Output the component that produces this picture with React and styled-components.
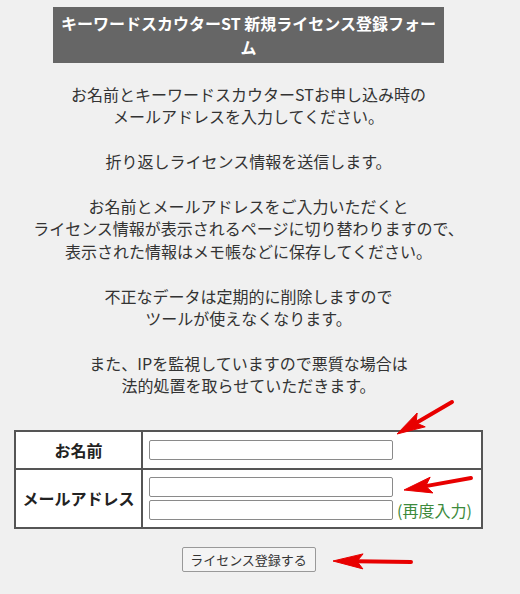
import React from "react";
import styled, { createGlobalStyle } from "styled-components";

const GlobalStyle = createGlobalStyle`
  html, body {
    margin: 0;
    padding: 0;
    background: #f0f0f0;
  }
  body {
    font-family: "Noto Sans CJK JP", "Noto Sans", sans-serif;
    color: #333;
  }
`;

const Page = styled.div`
  position: relative;
  width: 497px;
  min-height: 594px;
  padding-top: 7px;
  box-sizing: border-box;
  text-align: center;
`;

const Header = styled.h1`
  width: 391px;
  margin: 0 auto;
  padding: 4px 6px;
  box-sizing: border-box;
  background: #666;
  color: #fff;
  font-size: 16px;
  font-weight: bold;
  line-height: 24px;
`;

const Intro = styled.div`
  margin-top: 20px;
  display: flex;
  flex-direction: column;
  gap: 22.4px;
`;

const Para = styled.p`
  margin: 0;
  font-size: 16px;
  line-height: 22.4px;
  color: #333;
`;

const FormGrid = styled.div`
  width: 469px;
  margin: 33px auto 0;
  box-sizing: border-box;
  border: 2px solid #555;
  background: #555;
  display: grid;
  grid-template-columns: 125px 1fr;
  grid-template-rows: 36px 57px;
  gap: 2px;
`;

const LabelCell = styled.div`
  background: #fff;
  display: flex;
  align-items: center;
  justify-content: center;
  font-size: 16px;
  font-weight: bold;
  color: #222;
`;

const FieldCell = styled.div`
  background: #fff;
  display: flex;
  flex-direction: column;
  justify-content: center;
  gap: 3px;
  padding: 0 6px;
  text-align: left;
`;

const FieldRow = styled.div`
  display: flex;
  align-items: center;
  gap: 4px;
`;

const TextInput = styled.input`
  width: 244px;
  height: 20px;
  box-sizing: border-box;
  border: 1px solid #8a8a8a;
  border-radius: 2px;
  background: #fff;
  padding: 0 3px;
  margin: 0;
  font-size: 13px;
`;

const Hint = styled.span`
  font-size: 16px;
  color: #3c8a3c;
  line-height: 20px;
`;

const ButtonRow = styled.div`
  margin-top: 18px;
  display: flex;
  justify-content: center;
`;

const SubmitButton = styled.button`
  width: 134px;
  height: 25px;
  box-sizing: border-box;
  border: 1px solid #999;
  border-radius: 2px;
  background: #f4f4f4;
  color: #333;
  font-family: "Noto Sans CJK JP", sans-serif;
  font-size: 13px;
  padding: 0;
  line-height: 23px;
`;

const Overlay = styled.svg`
  position: absolute;
  left: 0;
  top: 0;
  width: 520px;
  height: 594px;
  pointer-events: none;
`;

function Arrow({ tip, tail, head = 28, half = 8 }) {
  const dx = tail[0] - tip[0];
  const dy = tail[1] - tip[1];
  const len = Math.hypot(dx, dy);
  const ux = dx / len;
  const uy = dy / len;
  const px = -uy;
  const py = ux;
  const bx = tip[0] + ux * head;
  const by = tip[1] + uy * head;
  const nx = tip[0] + ux * (head - 6);
  const ny = tip[1] + uy * (head - 6);
  const pts = [
    [tip[0], tip[1]],
    [bx + px * half, by + py * half],
    [nx, ny],
    [bx - px * half, by - py * half],
  ]
    .map((p) => p.join(","))
    .join(" ");
  return (
    <g fill="#e80000" stroke="#e80000">
      <line
        x1={nx}
        y1={ny}
        x2={tail[0]}
        y2={tail[1]}
        strokeWidth="4"
        strokeLinecap="round"
      />
      <polygon points={pts} strokeWidth="1" strokeLinejoin="round" />
    </g>
  );
}

export default function App() {
  return (
    <>
      <GlobalStyle />
      <Page>
        <Header>キーワードスカウターST 新規ライセンス登録フォーム</Header>
        <Intro>
          <Para>
            お名前とキーワードスカウターSTお申し込み時の
            <br />
            メールアドレスを入力してください。
          </Para>
          <Para>折り返しライセンス情報を送信します。</Para>
          <Para>
            お名前とメールアドレスをご入力いただくと
            <br />
            ライセンス情報が表示されるページに切り替わりますので、
            <br />
            表示された情報はメモ帳などに保存してください。
          </Para>
          <Para>
            不正なデータは定期的に削除しますので
            <br />
            ツールが使えなくなります。
          </Para>
          <Para>
            また、IPを監視していますので悪質な場合は
            <br />
            法的処置を取らせていただきます。
          </Para>
        </Intro>
        <FormGrid>
          <LabelCell>お名前</LabelCell>
          <FieldCell>
            <FieldRow>
              <TextInput type="text" />
            </FieldRow>
          </FieldCell>
          <LabelCell>メールアドレス</LabelCell>
          <FieldCell>
            <FieldRow>
              <TextInput type="text" />
            </FieldRow>
            <FieldRow>
              <TextInput type="text" />
              <Hint>(再度入力)</Hint>
            </FieldRow>
          </FieldCell>
        </FormGrid>
        <ButtonRow>
          <SubmitButton type="button">ライセンス登録する</SubmitButton>
        </ButtonRow>
      </Page>
      <Overlay viewBox="0 0 520 594">
        <Arrow tip={[397, 434]} tail={[452, 402]} />
        <Arrow tip={[404, 490]} tail={[471, 478]} />
        <Arrow tip={[333, 561]} tail={[411, 562]} head={30} half={7.5} />
      </Overlay>
    </>
  );
}
